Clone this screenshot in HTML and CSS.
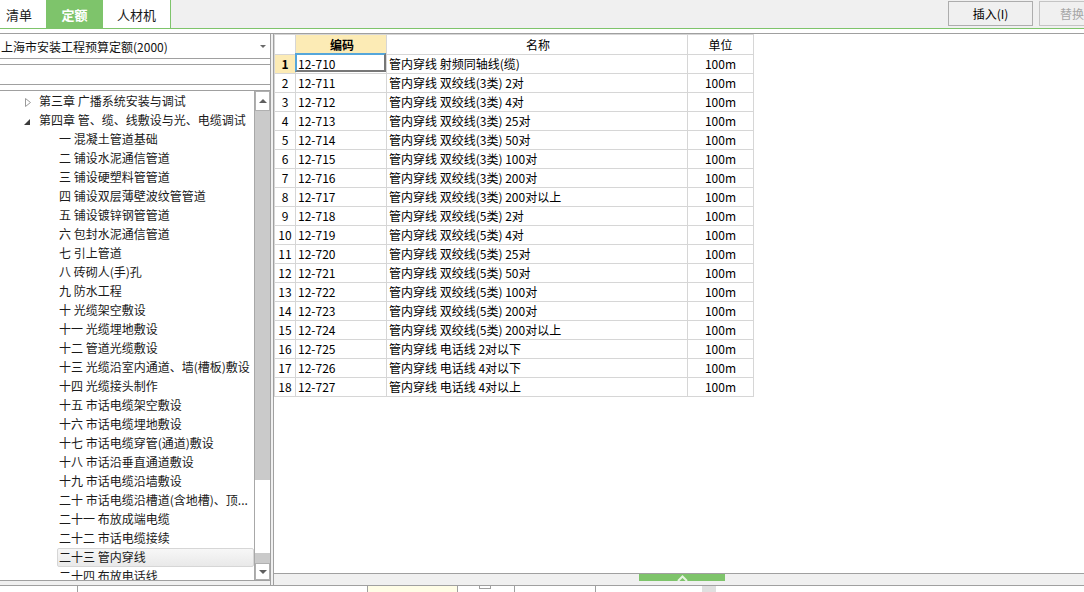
FILE: index.html
```html
<!DOCTYPE html>
<html lang="zh-CN">
<head>
<meta charset="utf-8">
<title>定额</title>
<link rel="stylesheet" href="styles.css">
</head>
<body>
<div class="topbar">
  <div class="tabs">
    <div class="tab tab-qd">清单</div>
    <div class="tab tab-de">定额</div>
    <div class="tab tab-rc">人材机</div>
  </div>
  <div class="actions">
    <div class="btn">插入(I)</div>
    <div class="btn btn-disabled">替换</div>
  </div>
</div>
<div class="gap-strip"></div>
<div class="main">
  <div class="left">
    <div class="left-top">
      <div class="combo">
        <span class="combo-text">上海市安装工程预算定额(2000)</span>
        <span class="combo-arrow"></span>
      </div>
      <div class="search"></div>
    </div>
    <div class="tree">
      <div class="tree-list">
        <div class="node ch"><span class="exp"><svg width="6" height="9" viewBox="0 0 6 9"><polygon points="0.5,0.5 5.5,4.5 0.5,8.5" fill="none" stroke="#9a9a9a" stroke-width="1"/></svg></span>第三章 广播系统安装与调试</div>
        <div class="node ch open"><span class="exp"><svg width="6" height="6" viewBox="0 0 6 6"><polygon points="6,0 6,6 0,6" fill="#3c3c3c"/></svg></span>第四章 管、缆、线敷设与光、电缆调试</div>
        <div class="node leaf">一 混凝土管道基础</div>
        <div class="node leaf">二 铺设水泥通信管道</div>
        <div class="node leaf">三 铺设硬塑料管管道</div>
        <div class="node leaf">四 铺设双层薄壁波纹管管道</div>
        <div class="node leaf">五 铺设镀锌钢管管道</div>
        <div class="node leaf">六 包封水泥通信管道</div>
        <div class="node leaf">七 引上管道</div>
        <div class="node leaf">八 砖砌人(手)孔</div>
        <div class="node leaf">九 防水工程</div>
        <div class="node leaf">十 光缆架空敷设</div>
        <div class="node leaf">十一 光缆埋地敷设</div>
        <div class="node leaf">十二 管道光缆敷设</div>
        <div class="node leaf">十三 光缆沿室内通道、墙(槽板)敷设</div>
        <div class="node leaf">十四 光缆接头制作</div>
        <div class="node leaf">十五 市话电缆架空敷设</div>
        <div class="node leaf">十六 市话电缆埋地敷设</div>
        <div class="node leaf">十七 市话电缆穿管(通道)敷设</div>
        <div class="node leaf">十八 市话沿垂直通道敷设</div>
        <div class="node leaf">十九 市话电缆沿墙敷设</div>
        <div class="node leaf">二十 市话电缆沿槽道(含地槽)、顶...</div>
        <div class="node leaf">二十一 布放成端电缆</div>
        <div class="node leaf">二十二 市话电缆接续</div>
        <div class="node leaf selected">二十三 管内穿线</div>
        <div class="node leaf">二十四 布放电话线</div>
      </div>
      <div class="scrollbar">
        <div class="sb-btn sb-up"><span class="tri-up"></span></div>
        <div class="sb-track sb-track-a"></div>
        <div class="sb-thumb"></div>
        <div class="sb-track sb-track-b"></div>
        <div class="sb-btn sb-down"><span class="tri-down"></span></div>
      </div>
    </div>
  </div>
  <div class="right">
    <div class="grid-area">
      <div class="grid">
        <div class="row head">
          <div class="c num"></div>
          <div class="c code hl">编码</div>
          <div class="c name">名称</div>
          <div class="c unit">单位</div>
        </div>
        <div class="row"><div class="c num cur">1</div><div class="c code focus">12-710</div><div class="c name">管内穿线 射频同轴线(缆)</div><div class="c unit">100m</div></div>
        <div class="row"><div class="c num">2</div><div class="c code">12-711</div><div class="c name">管内穿线 双绞线(3类) 2对</div><div class="c unit">100m</div></div>
        <div class="row"><div class="c num">3</div><div class="c code">12-712</div><div class="c name">管内穿线 双绞线(3类) 4对</div><div class="c unit">100m</div></div>
        <div class="row"><div class="c num">4</div><div class="c code">12-713</div><div class="c name">管内穿线 双绞线(3类) 25对</div><div class="c unit">100m</div></div>
        <div class="row"><div class="c num">5</div><div class="c code">12-714</div><div class="c name">管内穿线 双绞线(3类) 50对</div><div class="c unit">100m</div></div>
        <div class="row"><div class="c num">6</div><div class="c code">12-715</div><div class="c name">管内穿线 双绞线(3类) 100对</div><div class="c unit">100m</div></div>
        <div class="row"><div class="c num">7</div><div class="c code">12-716</div><div class="c name">管内穿线 双绞线(3类) 200对</div><div class="c unit">100m</div></div>
        <div class="row"><div class="c num">8</div><div class="c code">12-717</div><div class="c name">管内穿线 双绞线(3类) 200对以上</div><div class="c unit">100m</div></div>
        <div class="row"><div class="c num">9</div><div class="c code">12-718</div><div class="c name">管内穿线 双绞线(5类) 2对</div><div class="c unit">100m</div></div>
        <div class="row"><div class="c num">10</div><div class="c code">12-719</div><div class="c name">管内穿线 双绞线(5类) 4对</div><div class="c unit">100m</div></div>
        <div class="row"><div class="c num">11</div><div class="c code">12-720</div><div class="c name">管内穿线 双绞线(5类) 25对</div><div class="c unit">100m</div></div>
        <div class="row"><div class="c num">12</div><div class="c code">12-721</div><div class="c name">管内穿线 双绞线(5类) 50对</div><div class="c unit">100m</div></div>
        <div class="row"><div class="c num">13</div><div class="c code">12-722</div><div class="c name">管内穿线 双绞线(5类) 100对</div><div class="c unit">100m</div></div>
        <div class="row"><div class="c num">14</div><div class="c code">12-723</div><div class="c name">管内穿线 双绞线(5类) 200对</div><div class="c unit">100m</div></div>
        <div class="row"><div class="c num">15</div><div class="c code">12-724</div><div class="c name">管内穿线 双绞线(5类) 200对以上</div><div class="c unit">100m</div></div>
        <div class="row"><div class="c num">16</div><div class="c code">12-725</div><div class="c name">管内穿线 电话线 2对以下</div><div class="c unit">100m</div></div>
        <div class="row"><div class="c num">17</div><div class="c code">12-726</div><div class="c name">管内穿线 电话线 4对以下</div><div class="c unit">100m</div></div>
        <div class="row"><div class="c num">18</div><div class="c code">12-727</div><div class="c name">管内穿线 电话线 4对以上</div><div class="c unit">100m</div></div>
      </div>
    </div>
    <div class="splitter">
      <div class="grip"><svg width="11" height="6" viewBox="0 0 11 6"><polyline points="1,6 5.5,1.5 10,6" fill="none" stroke="#e6f5e0" stroke-width="2"/></svg></div>
    </div>
  </div>
</div>
<div class="bottom">
  <div class="b b1"></div>
  <div class="b b2"></div>
  <div class="b b3"></div>
  <div class="b b4"><span class="mini-box"></span></div>
  <div class="b b5"></div>
  <div class="b b6"><span class="mini-gray"></span></div>
</div>
</body>
</html>
```
FILE: styles.css
```css
* { box-sizing: border-box; }
html, body { margin: 0; padding: 0; }
body {
  width: 1084px;
  height: 592px;
  overflow: hidden;
  background: #fff;
  font-family: "Noto Sans CJK SC", "Microsoft YaHei", sans-serif;
  font-size: 12px;
  color: #000;
  display: flex;
  flex-direction: column;
}

/* top bar */
.topbar {
  height: 29px;
  flex: none;
  display: flex;
  background: #f0f0f0;
  border-bottom: 1px solid #7ec46b;
  overflow: hidden;
}
.tabs {
  display: flex;
  flex: none;
  width: 171px;
  background: #fff;
  border-right: 1px solid #7ec46b;
}
.tab {
  height: 28px;
  padding-top: 2px;
  line-height: 26px;
  font-size: 13px;
  text-align: center;
  color: #1a1a1a;
}
.tab-qd { width: 46px; text-align: left; padding-left: 6px; }
.tab-de { width: 57px; background: #7ec46b; color: #fff; font-weight: 700; }
.tab-rc { width: 67px; }
.actions {
  display: flex;
  flex: none;
  gap: 6px;
  margin-left: 777px;
  padding-top: 1px;
}
.btn {
  flex: none;
  width: 85px;
  height: 25px;
  border: 1px solid #adadad;
  background: #f0f0f0;
  line-height: 23px;
  text-align: center;
  font-size: 12px;
  color: #000;
}
.btn-disabled {
  color: #a6a6a6;
  border-color: #c4c4c4;
  text-align: left;
  padding-left: 20px;
}

.gap-strip { height: 4px; flex: none; background: #fff; }

/* main */
.main {
  flex: none;
  height: 553px;
  display: flex;
  gap: 2px;
  background: #f0f0f0;
  border-top: 1px solid #a0a0a0;
  border-bottom: 1px solid #a0a0a0;
}
.left {
  width: 271px;
  flex: none;
  display: flex;
  flex-direction: column;
  border-right: 1px solid #a0a0a0;
  background: #f0f0f0;
}
.left-top {
  background: #fff;
  padding-bottom: 5px;
}
.combo {
  height: 25px;
  display: flex;
  align-items: center;
  border-bottom: 1px solid #a0a0a0;
  background: #fff;
  padding-left: 1px;
}
.combo-text { font-size: 12px; color: #111; white-space: nowrap; }
.combo-arrow {
  margin-left: auto;
  margin-right: 4px;
  width: 0;
  height: 0;
  border-left: 3px solid transparent;
  border-right: 3px solid transparent;
  border-top: 3px solid #6a6a6a;
}
.search {
  margin-top: 5px;
  height: 21px;
  border-top: 1px solid #a0a0a0;
  border-bottom: 1px solid #a0a0a0;
  background: #fff;
}
.tree {
  height: 491px;
  display: flex;
  background: #fff;
  border-top: 1px solid #a0a0a0;
  border-bottom: 1px solid #a0a0a0;
}
.tree-list {
  flex: 1;
  min-width: 0;
  padding-top: 1px;
  overflow: hidden;
}
.node {
  height: 19px;
  line-height: 18px;
  white-space: nowrap;
  overflow: hidden;
  color: #1a1a1a;
  font-size: 12px;
}
.node.ch { padding-left: 25px; }
.node.ch.open { padding-left: 24px; }
.exp {
  display: inline-block;
  width: 14px;
  line-height: 0;
  vertical-align: middle;
}
.node.ch.open .exp { width: 15px; }
.exp svg { display: block; }
.node.leaf { padding-left: 59px; }
.node.leaf.selected {
  margin-left: 57px;
  padding-left: 1px;
  border: 1px solid #d6d6d6;
  border-radius: 2px;
  line-height: 16px;
  background: linear-gradient(#f7f7f7, #e9e9e9);
}

.scrollbar {
  width: 16px;
  flex: none;
  display: flex;
  flex-direction: column;
  border-left: 1px solid #a8a8a8;
}
.sb-btn {
  background: #fff;
  border: 1px solid #b0b0b0;
  display: flex;
  align-items: center;
  justify-content: center;
}
.sb-up { height: 20px; }
.sb-down { height: 17px; }
.tri-up {
  width: 0; height: 0;
  border-left: 4px solid transparent;
  border-right: 4px solid transparent;
  border-bottom: 4px solid #5f5f5f;
}
.tri-down {
  width: 0; height: 0;
  border-left: 4px solid transparent;
  border-right: 4px solid transparent;
  border-top: 4px solid #5f5f5f;
}
.sb-track { background: #cacaca; }
.sb-track-a { height: 369px; }
.sb-track-b { height: 10px; }
.sb-thumb { height: 73px; background: #fff; }

/* right */
.right {
  flex: 1;
  min-width: 0;
  display: flex;
  flex-direction: column;
  border-left: 1px solid #a0a0a0;
}
.grid-area {
  flex: 1;
  background: #fff;
  border-bottom: 1px solid #a0a0a0;
}
.grid {
  width: 480px;
  border-left: 1px solid #d6d6d6;
  border-top: 1px solid #d6d6d6;
}
.row {
  display: flex;
  height: 19px;
  border-bottom: 1px solid #d6d6d6;
}
.row.head { height: 20px; }
.c {
  border-right: 1px solid #d6d6d6;
  line-height: 18px;
  white-space: nowrap;
  overflow: visible;
  font-size: 12px;
  color: #000;
}
.row.head .c { line-height: 19px; text-align: center; }
.num { width: 21px; text-align: center; }
.code { width: 91px; padding-left: 2px; }
.name { width: 301px; padding-left: 2px; }
.unit { width: 66px; text-align: center; }
.hl { background: #fcebb5; font-weight: 700; }
.cur { background: #fcebb5; font-weight: 700; }
.focus { position: relative; }
.focus::after {
  content: "";
  position: absolute;
  left: -1px;
  top: -2px;
  right: 0;
  bottom: 1px;
  border: 2px solid #777;
  border-top-color: #55a6da;
  border-left-color: #55a6da;
}

.splitter {
  height: 11px;
  flex: none;
  background: #f0f0f0;
  padding-left: 365px;
}
.grip {
  width: 86px;
  height: 7px;
  background: #7ec46b;
  display: flex;
  justify-content: center;
  align-items: flex-end;
}
.grip svg { display: block; }

/* bottom strip */
.bottom {
  flex: 1;
  display: flex;
  background: #fff;
}
.b { border-left: 1px solid #a0a0a0; flex: none; }
.b1 { width: 77px; border-left: none; }
.b2 { width: 290px; }
.b3 { width: 90px; background: #fffde6; }
.b4 { width: 57px; padding-left: 21px; }
.b5 { width: 81px; }
.b6 { flex: 1; padding-left: 106px; }
.mini-box {
  display: block;
  width: 12px;
  height: 3px;
  border: 1px solid #a0a0a0;
  border-top: none;
}
.mini-gray {
  display: block;
  width: 14px;
  height: 6px;
  background: #e0e0e0;
}
```
